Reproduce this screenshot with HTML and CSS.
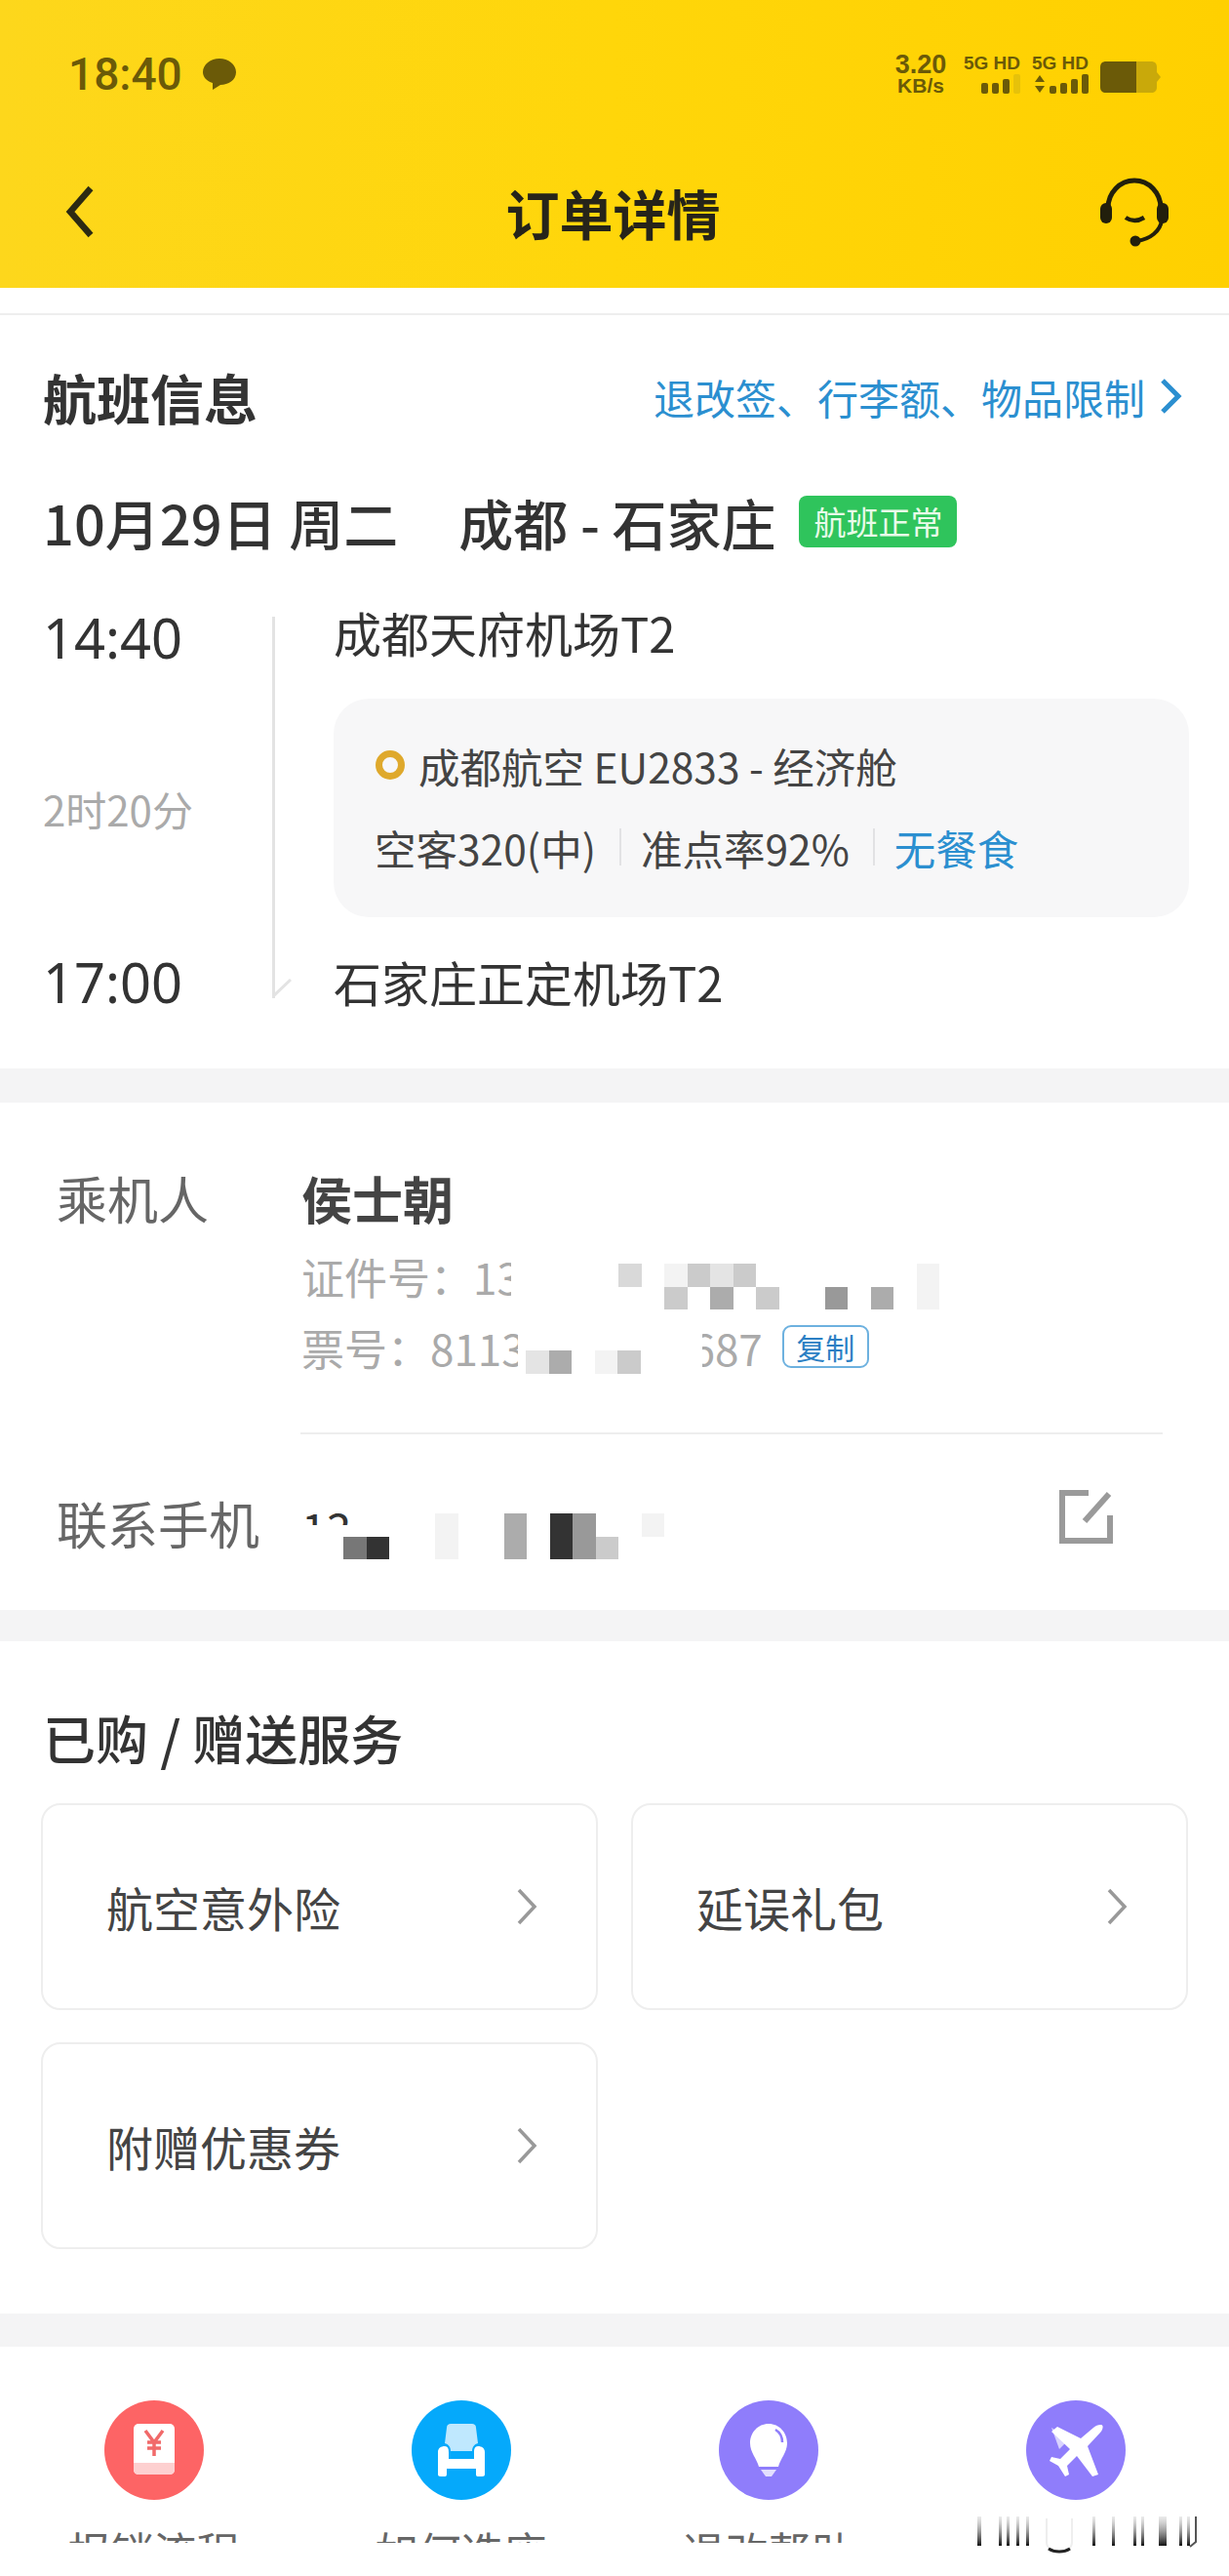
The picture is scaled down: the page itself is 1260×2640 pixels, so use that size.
FILE: index.html
```html
<!DOCTYPE html>
<html lang="zh-CN">

<head>
  <meta charset="UTF-8" />
  <meta name="viewport" content="width=device-width, initial-scale=1.0" />
  <title>订单详情</title>
  <link rel="stylesheet" href="styles.css">
</head>

<body>
  <div class="header">
    <div class="status-bar">
      <div class="status-left">
        <span class="clock">18:40</span>
        <svg class="bubble" width="36" height="36" viewBox="0 0 36 36">
          <path d="M18 2C27 2 35 8 35 16C35 24 27 29 19 29L11 34L11 27C5 25 1 21 1 16C1 8 9 2 18 2Z" fill="#6b5a08" />
        </svg>
      </div>
      <div class="status-right">
        <div class="speed"><b>3.20</b><span>KB/s</span></div>
        <div class="sim">
          <span class="sim-name">5G HD</span>
          <div class="bars">
            <i class="b1"></i><i class="b1"></i><i class="b2"></i><i class="b3 off"></i>
          </div>
        </div>
        <div class="sim">
          <span class="sim-name">5G HD</span>
          <div class="bars">
            <svg width="12" height="20" viewBox="0 0 12 20">
              <path d="M6 1L11 8H1ZM6 19L1 12H11Z" fill="#6b5a08" />
            </svg>
            <i class="b0"></i><i class="b1"></i><i class="b2"></i><i class="b3"></i>
          </div>
        </div>
        <svg class="battery" width="62" height="32" viewBox="0 0 62 32">
          <path d="M37 0H52C56 0 58 2 58 6V11L62 16L58 21V26C58 30 56 32 52 32H37Z" fill="#c9a90a" />
          <path d="M6 0H37V32H6C2 32 0 30 0 26V6C0 2 2 0 6 0Z" fill="#6b5a08" />
        </svg>
      </div>
    </div>
    <div class="nav-bar">
      <svg class="back" width="30" height="54" viewBox="0 0 30 54">
        <path d="M26 3L5 27L26 51" fill="none" stroke="#2c2a12" stroke-width="6.5" />
      </svg>
      <div class="nav-title">订单详情</div>
      <svg class="headset" width="72" height="72" viewBox="0 0 72 72">
        <path d="M8 32A27 28 0 0 1 62 32" fill="none" stroke="#221f0c" stroke-width="5" />
        <rect x="0" y="27" width="12" height="21" rx="6" fill="#221f0c" />
        <rect x="58" y="27" width="12" height="21" rx="6" fill="#221f0c" />
        <path d="M26 42Q35 48 45 42" fill="none" stroke="#221f0c" stroke-width="4.5" />
        <path d="M63 44C62 56 51 64 38 66" fill="none" stroke="#221f0c" stroke-width="4" />
        <circle cx="36" cy="66" r="5.5" fill="#221f0c" />
      </svg>
    </div>
  </div>
  <div class="under-header"></div>

  <div class="section flight">
    <div class="flight-head">
      <h2>航班信息</h2>
      <div class="rules">
        <span>退改签、行李额、物品限制</span>
        <svg width="24" height="38" viewBox="0 0 24 38">
          <path d="M4 3L20 19L4 35" fill="none" stroke="#2b8fd0" stroke-width="5" />
        </svg>
      </div>
    </div>
    <div class="route">
      <span class="route-date">10月29日 周二</span>
      <span class="route-city">成都 - 石家庄</span>
      <span class="badge">航班正常</span>
    </div>
    <div class="timeline">
      <div class="time time-dep">14:40</div>
      <div class="rail">
        <div class="rail-line"></div>
        <svg class="rail-tick" width="20" height="20" viewBox="0 0 20 20">
          <path d="M0 19L19 1" fill="none" stroke="#e3e3e3" stroke-width="3" />
        </svg>
      </div>
      <div class="airport airport-dep">成都天府机场T2</div>

      <div class="duration">2时20分</div>
      <div class="flight-card">
        <div class="carrier">
          <span class="ring"></span>
          <span>成都航空 EU2833 - 经济舱</span>
        </div>
        <div class="facts">
          <span>空客320(中)</span>
          <span class="fact-sep"></span>
          <span>准点率92%</span>
          <span class="fact-sep"></span>
          <span class="blue">无餐食</span>
        </div>
      </div>

      <div class="time">17:00</div>
      <div class="airport">石家庄正定机场T2</div>
    </div>
  </div>

  <div class="section passenger">
    <div class="pax-row">
      <div class="pax-label">乘机人</div>
      <div class="pax-info">
        <div class="pax-name">侯士朝</div>
        <div class="pax-line id-line">
          <span class="cut-a">证件号：13</span>
          <div class="mosaic mosaic-id">
            <i class="g3"></i><i></i><i class="g1"></i><i class="g4"></i><i class="g2"></i><i class="g4"></i><i></i><i></i><i></i><i></i><i></i><i></i><i></i><i class="g1"></i>
            <i></i><i></i><i class="g4"></i><i></i><i class="g5"></i><i></i><i class="g4"></i><i></i><i></i><i class="g6"></i><i></i><i class="g5"></i><i></i><i class="g1"></i>
          </div>
        </div>
        <div class="pax-line ticket-line">
          <span class="cut-b">票号：8113</span>
          <div class="mosaic mosaic-ticket">
            <i class="g2"></i><i class="g5"></i><i></i><i class="g1"></i><i class="g4"></i>
          </div>
          <span class="cut-c">687</span>
          <span class="copy-tag">复制</span>
        </div>
      </div>
    </div>
    <div class="pax-divider"></div>
    <div class="contact-row">
      <div class="pax-label">联系手机</div>
      <div class="phone">
        <span class="cut-d">13</span>
        <div class="mosaic mosaic-phone">
          <i></i><i></i><i></i><i></i><i class="g1"></i><i></i><i></i><i class="g5"></i><i></i><i class="g9"></i><i class="g6"></i><i></i><i></i><i class="g1"></i>
          <i class="g7"></i><i class="g9"></i><i></i><i></i><i class="g1"></i><i></i><i></i><i class="g5"></i><i></i><i class="g9"></i><i class="g6"></i><i class="g4"></i><i></i><i></i>
        </div>
      </div>
      <svg class="edit" width="58" height="58" viewBox="0 0 58 58">
        <path d="M31 4H4V53H53V27" fill="none" stroke="#9a9a9a" stroke-width="6" />
        <path d="M52 5L27 33" fill="none" stroke="#9a9a9a" stroke-width="6" />
      </svg>
    </div>
  </div>

  <div class="section services">
    <h3>已购 / 赠送服务</h3>
    <div class="service-grid">
      <div class="service-card">
        <span>航空意外险</span>
        <svg width="24" height="40" viewBox="0 0 24 40">
          <path d="M4 3L20 20L4 37" fill="none" stroke="#999" stroke-width="3.5" />
        </svg>
      </div>
      <div class="service-card">
        <span>延误礼包</span>
        <svg width="24" height="40" viewBox="0 0 24 40">
          <path d="M4 3L20 20L4 37" fill="none" stroke="#999" stroke-width="3.5" />
        </svg>
      </div>
      <div class="service-card">
        <span>附赠优惠券</span>
        <svg width="24" height="40" viewBox="0 0 24 40">
          <path d="M4 3L20 20L4 37" fill="none" stroke="#999" stroke-width="3.5" />
        </svg>
      </div>
    </div>
  </div>

  <div class="section shortcuts">
    <div class="shortcut">
      <svg width="102" height="102" viewBox="0 0 102 102">
        <circle cx="51" cy="51" r="51" fill="#fd6465" />
        <rect x="30" y="24" width="42" height="52" rx="5" fill="#fff" />
        <path d="M30 64H72V71C72 74 70 76 67 76H35C32 76 30 74 30 71Z" fill="#fdd0d0" />
        <path d="M42 31L51 43L60 31M51 43V57M44 43H58M44 49H58" fill="none" stroke="#f16a6a" stroke-width="3.5" />
      </svg>
      <div class="shortcut-label">报销流程</div>
    </div>
    <div class="shortcut">
      <svg width="102" height="102" viewBox="0 0 102 102">
        <circle cx="51" cy="51" r="51" fill="#05a9fb" />
        <path d="M36 28C36 25 38 24 40 24H62C64 24 66 25 66 28L68 44C64 45 62 48 62 52H40C40 48 38 45 34 44Z" fill="#bfe8fe" />
        <path d="M34 47C38 47 38 51 38 54V60H64V54C64 51 64 47 68 47C72 47 75 49 75 53V76C75 78 73 78 70 78C66 78 66 78 66 74V70H36V74C36 78 36 78 32 78C29 78 27 78 27 76V53C27 49 30 47 34 47Z" fill="#fff" />
      </svg>
      <div class="shortcut-label">如何选座</div>
    </div>
    <div class="shortcut">
      <svg width="102" height="102" viewBox="0 0 102 102">
        <circle cx="51" cy="51" r="51" fill="#8f7dfb" />
        <path d="M51 24C62 24 70 33 70 44C70 53 63 60 61 68H41C39 60 32 53 32 44C32 33 40 24 51 24Z" fill="#fff" />
        <path d="M43 71H59L54 78H48Z" fill="#e3dffe" />
        <path d="M58 30C63 33 65 38 65 43" fill="none" stroke="#8f7dfb" stroke-width="2.5" />
      </svg>
      <div class="shortcut-label">退改帮助</div>
    </div>
    <div class="shortcut">
      <svg width="102" height="102" viewBox="0 0 102 102">
        <circle cx="51" cy="51" r="51" fill="#8f7dfb" />
        <path d="M26 28L44 40L34 50Z" fill="#d9d3fe" />
        <path d="M76 25C80 24 79 30 76 33L63 47L74 76L68 78L52 57L42 67L44 76L40 78L33 67L24 62L26 58L35 60L45 50L26 32L32 27L56 39L69 28C71 26 74 25 76 25Z" fill="#fff" />
      </svg>
    </div>
    <svg class="watermark" width="228" height="40" viewBox="0 0 228 40">
      <defs>
        <linearGradient id="fade" x1="0" y1="0" x2="0" y2="1">
          <stop offset="0" stop-color="#bbb" stop-opacity="0.3" />
          <stop offset="1" stop-color="#111" />
        </linearGradient>
      </defs>
      <g fill="url(#fade)">
        <rect x="0" y="2" width="4" height="30" />
        <rect x="22" y="2" width="3" height="30" />
        <rect x="30" y="2" width="3" height="30" />
        <rect x="40" y="2" width="3" height="30" />
        <rect x="50" y="2" width="3" height="30" />
        <rect x="118" y="2" width="3" height="30" />
        <rect x="138" y="2" width="3" height="30" />
        <rect x="160" y="2" width="3" height="30" />
        <rect x="168" y="2" width="3" height="30" />
        <rect x="186" y="2" width="8" height="30" />
        <rect x="207" y="2" width="3" height="30" />
        <rect x="215" y="2" width="3" height="30" />
      </g>
      <path d="M71 4V28C71 42 97 42 97 28V4" fill="none" stroke="#eee" stroke-width="2" />
      <path d="M73 35C79 39 89 39 95 35" fill="none" stroke="#222" stroke-width="3" />
      <path d="M224 2V28L218 33" fill="none" stroke="#555" stroke-width="2" />
    </svg>
  </div>
</body>

</html>
```

FILE: styles.css
```css
body {
  margin: 0;
  padding: 0;
  height: 2640px;
  overflow: hidden;
  background-color: #fff;
  font-family: "Noto Sans CJK SC", "Noto Sans", sans-serif;
  color: #333;
}

h2,
h3 {
  margin: 0;
}

/* top bar */
.header {
  height: 295px;
  background: linear-gradient(90deg, #fdd71c 0%, #ffd60a 50%, #ffd000 100%);
}

.under-header {
  height: 26px;
  border-bottom: 2px solid #eeeeee;
}

.status-bar {
  height: 156px;
  box-sizing: border-box;
  padding: 56px 70px 0 70px;
  display: flex;
  justify-content: space-between;
  align-items: flex-start;
  color: #6b5a08;
}

.status-left {
  display: flex;
  align-items: center;
  gap: 20px;
  height: 40px;
}

.clock {
  font-family: Roboto, sans-serif;
  font-size: 46px;
  font-weight: 500;
  line-height: 40px;
}

.status-right {
  display: flex;
  align-items: flex-start;
  gap: 12px;
  font-family: "Liberation Sans", sans-serif;
  font-weight: bold;
}

.speed {
  display: flex;
  flex-direction: column;
  align-items: center;
  width: 56px;
  margin-right: 4px;
  margin-top: -1px;
  line-height: 1;
}

.speed b {
  font-size: 27px;
  line-height: 23px;
}

.speed span {
  font-size: 21px;
  line-height: 19px;
}

.sim {
  width: 58px;
  display: flex;
  flex-direction: column;
  align-items: flex-end;
}

.sim-name {
  font-size: 19px;
  line-height: 18px;
  white-space: nowrap;
}

.bars {
  display: flex;
  align-items: flex-end;
  gap: 4px;
  height: 20px;
  margin-top: 2px;
}

.bars i {
  display: block;
  width: 7px;
  border-radius: 2px;
  background-color: #6b5a08;
}

.bars .b0 { height: 8px; }
.bars .b1 { height: 11px; }
.bars .b2 { height: 15px; }
.bars .b3 { height: 20px; }
.bars .off { background-color: #e6c20a; }

.battery {
  margin-top: 7px;
}

.nav-bar {
  height: 139px;
  box-sizing: border-box;
  padding: 0 60px 18px 67px;
  display: flex;
  justify-content: space-between;
  align-items: center;
}

.nav-title {
  font-size: 55px;
  font-weight: 700;
  color: #26241a;
  margin-left: 32px;
}

/* sections */
.section {
  border-bottom: 32px solid #f4f4f5;
  box-sizing: border-box;
}

.flight {
  height: 807px;
  border-bottom-width: 35px;
  padding: 38px 0 0 44px;
}

.flight-head {
  display: flex;
  justify-content: space-between;
  align-items: center;
  height: 90px;
  padding-right: 48px;
}

.flight-head h2 {
  font-size: 55px;
  font-weight: 700;
  color: #333;
}

.rules {
  display: flex;
  align-items: center;
  gap: 14px;
  font-size: 42px;
  color: #2b8fd0;
}

.route {
  display: flex;
  align-items: center;
  height: 60px;
  margin-top: 53px;
  font-size: 56px;
  font-weight: 500;
  color: #333;
}

.route-city {
  margin-left: 62px;
}

.badge {
  margin-left: 24px;
  width: 162px;
  height: 53px;
  line-height: 53px;
  text-align: center;
  font-size: 33px;
  font-weight: 400;
  color: #e9fbe9;
  background-color: #2fc45c;
  border-radius: 8px;
}

.timeline {
  display: grid;
  grid-template-columns: 235px 63px 877px;
  grid-template-rows: 50px 224px 50px;
  row-gap: 41px;
  margin-top: 61px;
  align-items: center;
}

.time {
  font-family: "Noto Sans", sans-serif;
  font-size: 56px;
  line-height: 50px;
  color: #333;
}

.time-dep {
  margin-top: 6px;
}

.rail {
  grid-column: 2;
  grid-row: 1 / 4;
  align-self: stretch;
  display: flex;
  flex-direction: column;
  margin-top: 7px;
  margin-bottom: 8px;
}

.rail-line {
  flex: 1;
  width: 3px;
  background-color: #e3e3e3;
}

.rail-tick {
  margin-top: -20px;
}

.airport {
  grid-column: 3;
  font-size: 49px;
  line-height: 50px;
  color: #333;
}

.airport-dep {
  margin-top: -4px;
}

.duration {
  font-size: 42px;
  color: #aaa;
}

.flight-card {
  grid-column: 3;
  height: 224px;
  box-sizing: border-box;
  padding: 38px 0 0 42px;
  background-color: #f7f7f8;
  border-radius: 36px;
  font-size: 42.5px;
  color: #444;
}

.carrier {
  display: flex;
  align-items: center;
  gap: 14px;
  height: 60px;
}

.ring {
  box-sizing: content-box;
  width: 16px;
  height: 16px;
  margin-left: 1px;
  border: 7px solid #dfa92c;
  border-radius: 50%;
}

.facts {
  display: flex;
  align-items: center;
  height: 60px;
  margin-top: 24px;
}

.fact-sep {
  width: 2px;
  height: 38px;
  margin: 0 20px 0 24px;
  background-color: #e2e2e4;
}

.blue {
  color: #2b8fd0;
}

.passenger {
  height: 552px;
  padding: 67px 68px 0 58px;
}

.pax-row {
  display: flex;
}

.pax-label {
  width: 251px;
  flex-shrink: 0;
  font-size: 52px;
  line-height: 62px;
  color: #666;
}

.pax-name {
  font-size: 52px;
  line-height: 62px;
  font-weight: 700;
  color: #444;
}

.pax-line {
  display: flex;
  font-size: 44px;
  color: #aaa;
}

.id-line {
  align-items: flex-start;
  height: 47px;
  line-height: 47px;
  margin-top: 33px;
}

.ticket-line {
  align-items: flex-start;
  height: 60px;
  line-height: 60px;
  margin-top: 12px;
}

/* the redacted numbers: white patches and mosaic blocks lie over the text */
.cut-a,
.cut-b,
.cut-c,
.cut-d {
  position: relative;
  white-space: nowrap;
}

.cut-a {
  width: 215px;
  margin-top: -7px;
}

.cut-b {
  width: 222px;
}

.cut-a::after,
.cut-b::after {
  content: "";
  position: absolute;
  left: 100%;
  top: 0;
  bottom: 0;
  width: 10px;
  background-color: #fff;
}

.cut-c::before {
  content: "";
  position: absolute;
  left: -2px;
  top: 0;
  bottom: 0;
  width: 13px;
  background-color: #fff;
}

.mosaic {
  position: relative;
  display: grid;
  grid-auto-rows: 23.5px;
  flex-shrink: 0;
}

.mosaic i { display: block; }

.mosaic-id {
  grid-template-columns: repeat(14, 23.5px);
  margin-left: 110px;
  margin-top: 3px;
}

.mosaic-ticket {
  grid-template-columns: repeat(5, 23.5px);
  margin-left: 8px;
  margin-top: 33px;
  margin-right: 52px;
}

.mosaic-phone {
  grid-template-columns: repeat(14, 23.5px);
}

.g1 { background-color: #f3f3f3; }
.g2 { background-color: #e4e4e4; }
.g3 { background-color: #d9d9d9; }
.g4 { background-color: #cbcbcb; }
.g5 { background-color: #acacac; }
.g6 { background-color: #999; }
.g7 { background-color: #777; }
.g9 { background-color: #333; }

.copy-tag {
  width: 89px;
  height: 44px;
  line-height: 40px;
  margin-left: 20px;
  margin-top: 7px;
  box-sizing: border-box;
  text-align: center;
  font-size: 30px;
  color: #2b7fc4;
  border: 2px solid #6db1df;
  border-radius: 9px;
}

.pax-divider {
  height: 2px;
  margin: 57px 0 0 250px;
  background-color: #eeeeee;
}

.contact-row {
  display: flex;
  align-items: flex-start;
  margin-top: 60px;
}

.phone {
  display: flex;
  flex: 1;
  margin-top: 21px;
}

.cut-d {
  width: 43px;
  height: 22px;
  font-size: 46px;
  line-height: 50px;
  margin-top: -10px;
  color: #333;
}

.cut-d::after {
  content: "";
  position: absolute;
  left: -2px;
  top: 22px;
  width: 62px;
  height: 40px;
  background-color: #fff;
}

.edit {
  margin-top: -4px;
  margin-right: 49px;
}

.services {
  height: 723px;
  border-bottom-width: 34px;
  padding: 67px 42px 0 42px;
}

.services h3 {
  font-size: 54px;
  font-weight: 500;
  line-height: 64px;
  margin-left: 2px;
  color: #333;
}

.service-grid {
  display: grid;
  grid-template-columns: 571px 571px;
  grid-auto-rows: 212px;
  column-gap: 34px;
  row-gap: 33px;
  margin-top: 35px;
}

.service-card {
  display: flex;
  align-items: center;
  justify-content: space-between;
  padding: 0 59px 0 65px;
  box-sizing: border-box;
  border: 2px solid #eeeeee;
  border-radius: 20px;
  font-size: 48px;
  color: #444;
}

.shortcuts {
  position: relative;
  height: 235px;
  border-bottom: none;
  display: grid;
  grid-template-columns: repeat(4, 315px);
  padding-top: 55px;
}

.shortcut {
  display: flex;
  flex-direction: column;
  align-items: center;
}

/* labels run under a white patch, only their tops show */
.shortcut-label {
  position: relative;
  margin-top: 30px;
  font-size: 44px;
  line-height: 44px;
  color: #666;
}

.shortcut-label::after {
  content: "";
  position: absolute;
  left: -4px;
  right: -4px;
  top: 14px;
  height: 34px;
  background-color: #fff;
}

.watermark {
  position: absolute;
  left: 1002px;
  top: 172px;
}
```
